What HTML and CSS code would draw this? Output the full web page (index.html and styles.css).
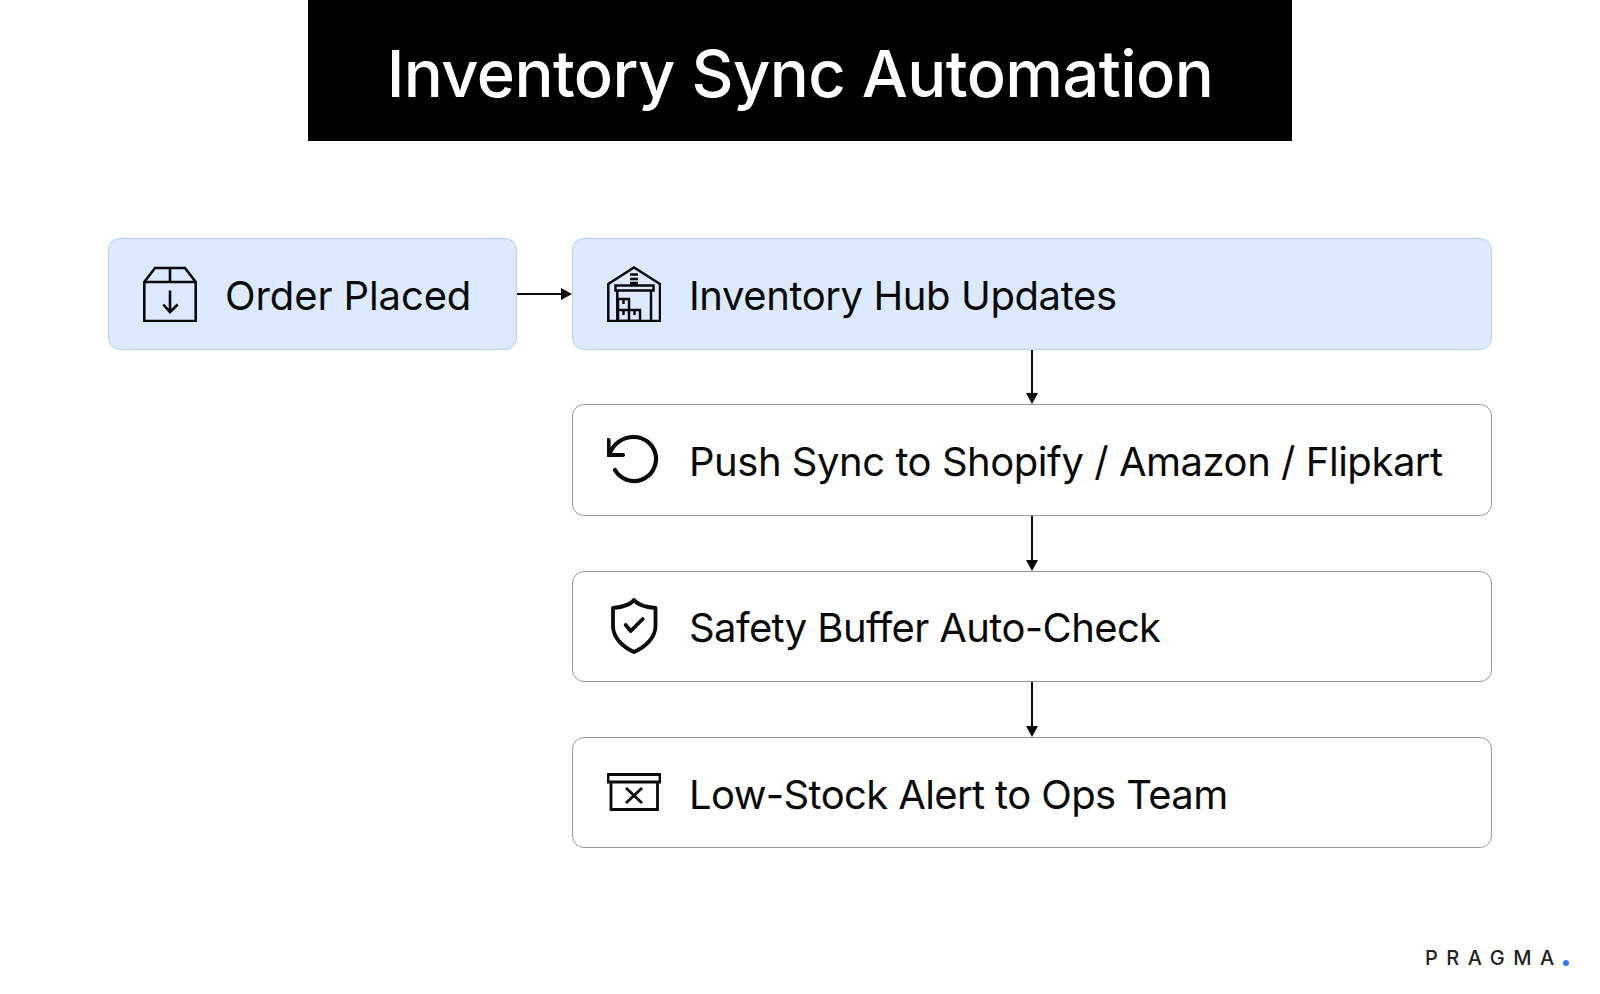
FILE: index.html
```html
<!DOCTYPE html>
<html lang="en">
<head>
<meta charset="utf-8">
<title>Inventory Sync Automation</title>
<link rel="stylesheet" href="styles.css">
</head>
<body>
<div class="page">
  <header class="banner"><h1 class="title">Inventory Sync Automation</h1></header>
  <main class="flow">
    <div class="row-first">
      <div class="card card-blue card-small">
        <svg class="icon" viewBox="0 0 54 56" fill="none" stroke="#0a0a0a" stroke-width="2.600"><path d="M1.300 16 12 2H42L52.700 16V55H1.300Z"/><path d="M1.300 16H52.700M27 2V16M27 24.500V46M20.300 38.500 27 46 34.700 38.500"/></svg>
        <span class="label label-wide">Order Placed</span>
      </div>
      <div class="h-arrow"><span class="h-line"></span><span class="h-head"></span></div>
      <div class="card card-blue">
        <svg class="icon" viewBox="0 0 54 56" fill="none" stroke="#0a0a0a" stroke-width="2.500"><path d="M1.300 55V18L27 1.500 53 18V55Z"/><path d="M8.500 19.500H46.500V24.500H8.500ZM10.300 24.500V55M44 24.500V55M23 8.500H31M23 13H31M23 17H31"/><path d="M11 33H22V44H11ZM11 44H22V55H11ZM22 44H33V55H22ZM16.500 33V38M16.500 44V49M27.500 44V49"/></svg>
        <span class="label label-open">Inventory Hub Updates</span>
      </div>
    </div>
    <div class="v-arrow"><span class="v-line"></span><span class="v-head"></span></div>
    <div class="card">
      <svg class="icon" viewBox="0 0 54 56" fill="none" stroke="#0a0a0a" stroke-width="4.200" stroke-linecap="round" stroke-linejoin="round"><path d="M2 23C6 12 15 5 27 5A22 22 0 1 1 8 38"/><path d="M1.500 8V23H16"/></svg>
      <span class="label">Push Sync to Shopify / Amazon / Flipkart</span>
    </div>
    <div class="v-arrow"><span class="v-line"></span><span class="v-head"></span></div>
    <div class="card">
      <svg class="icon" viewBox="0 0 54 56" fill="none" stroke="#0a0a0a" stroke-width="3.800" stroke-linecap="round" stroke-linejoin="round"><path d="M27 2C30 6 37 9 48.500 10V28C48.500 40 38 49 27 54C16 49 6 40 6 28V10C17 9 24 6 27 2Z"/><path d="M18.700 27 23.700 33 35.700 21"/></svg>
      <span class="label label-tight">Safety Buffer Auto-Check</span>
    </div>
    <div class="v-arrow"><span class="v-line"></span><span class="v-head"></span></div>
    <div class="card">
      <svg class="icon" viewBox="0 0 54 56" fill="none" stroke="#0a0a0a" stroke-width="2.800"><path d="M1 9.500H53V17H1ZM4 17H50.500V44.500H4Z"/><path d="M19 23 35 38M35 23 19 38"/></svg>
      <span class="label label-tight">Low-Stock Alert to Ops Team</span>
    </div>
  </main>
  <footer class="brand">PRAGMA<span class="brand-dot"></span></footer>
</div>
</body>
</html>
```
FILE: styles.css
```css
* { box-sizing: border-box; }
html, body { margin: 0; padding: 0; background: #fff; }
.page {
  width: 1600px;
  height: 994px;
  display: flex;
  flex-direction: column;
  font-family: Inter, "Liberation Sans", sans-serif;
  color: #0a0a0a;
  overflow: hidden;
}
.banner {
  width: 984px;
  height: 141px;
  margin: 0 auto;
  background: #000;
  display: flex;
  align-items: center;
  justify-content: center;
}
.title {
  margin: 0;
  padding-top: 6px;
  color: #fff;
  font-size: 65px;
  font-weight: 500;
  letter-spacing: -0.6px;
  line-height: 1;
}
.flow {
  margin: 97px 0 0 572px;
  width: 920px;
  display: flex;
  flex-direction: column;
}
.row-first {
  display: flex;
  margin-left: -464px;
  width: 1384px;
}
.card {
  flex: 1;
  height: 111.500px;
  min-height: 111.500px;
  padding: 0 32px 0 34px;
  border: 1px solid #9a9a9a;
  border-radius: 12px;
  background: #fff;
  display: flex;
  align-items: center;
  gap: 28px;
}
.card-blue {
  background: #dce9ff;
  border-color: #b4cff8;
}
.card-small {
  flex: 0 0 409px;
}
.icon {
  width: 54px;
  height: 56px;
  flex: none;
}
.label {
  padding-top: 4px;
  font-size: 40px;
  font-weight: 400;
  letter-spacing: -0.47px;
  line-height: 1;
  white-space: nowrap;
}
.label-wide { letter-spacing: -0.1px; }
.label-open { letter-spacing: -0.4px; }
.label-tight { letter-spacing: -0.62px; }
.h-arrow {
  flex: 0 0 55px;
  display: flex;
  align-items: center;
}
.h-line {
  flex: 1;
  height: 2px;
  background: #0a0a0a;
}
.h-head {
  width: 0;
  height: 0;
  border-left: 11px solid #0a0a0a;
  border-top: 6px solid transparent;
  border-bottom: 6px solid transparent;
}
.v-arrow {
  height: 54.800px;
  display: flex;
  flex-direction: column;
  align-items: center;
}
.v-line {
  flex: 1;
  width: 2px;
  background: #0a0a0a;
}
.v-head {
  width: 0;
  height: 0;
  border-top: 11px solid #0a0a0a;
  border-left: 6px solid transparent;
  border-right: 6px solid transparent;
}
.brand {
  margin: 98px 0 0 1425px;
  font-size: 20px;
  font-weight: 500;
  letter-spacing: 8.500px;
  color: #222;
  display: flex;
  align-items: flex-end;
  line-height: 24px;
  font-family: Inter, sans-serif;
}
.brand-dot {
  width: 6px;
  height: 6px;
  border-radius: 50%;
  background: #2f7bf5;
  margin: 0 0 4px 0;
}
```
